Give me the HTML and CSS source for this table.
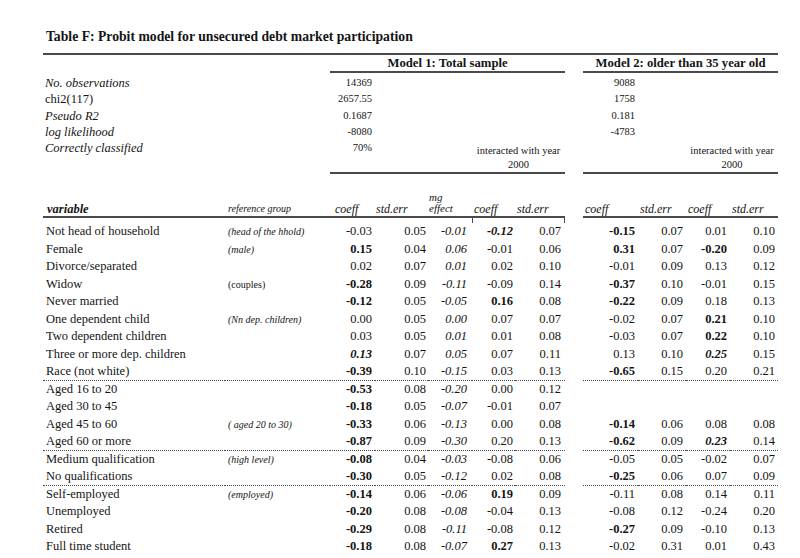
FILE: index.html
```html
<!DOCTYPE html>
<html lang="en">
<head>
<meta charset="utf-8">
<title>Table F: Probit model</title>
<link rel="stylesheet" href="styles.css">
</head>
<body>
<div class="page">
  <h1 class="title">Table F: Probit model for unsecured debt market participation</h1>
  <table class="probit">
    <colgroup>
      <col class="w-label"><col class="w-ref"><col class="w-c1"><col class="w-se1"><col class="w-mg"><col class="w-c2"><col class="w-se2"><col class="w-gap"><col class="w-m2c1"><col class="w-m2se1"><col class="w-m2c2"><col class="w-m2se2">
    </colgroup>
    <thead>
      <tr class="models">
        <th></th><th></th>
        <th colspan="5" class="model">Model 1: Total sample</th>
        <th class="gap"></th>
        <th colspan="4" class="model">Model 2: older than 35 year old</th>
      </tr>
    </thead>
    <tbody class="stats">
      <tr class="first">
        <td class="slab it">No. observations</td><td></td><td class="snum">14369</td><td colspan="4"></td><td class="gap"></td><td class="snum">9088</td><td colspan="3"></td>
      </tr>
      <tr>
        <td class="slab">chi2(117)</td><td></td><td class="snum">2657.55</td><td colspan="4"></td><td class="gap"></td><td class="snum">1758</td><td colspan="3"></td>
      </tr>
      <tr>
        <td class="slab it">Pseudo R2</td><td></td><td class="snum">0.1687</td><td colspan="4"></td><td class="gap"></td><td class="snum">0.181</td><td colspan="3"></td>
      </tr>
      <tr>
        <td class="slab it">log likelihood</td><td></td><td class="snum">-8080</td><td colspan="4"></td><td class="gap"></td><td class="snum">-4783</td><td colspan="3"></td>
      </tr>
      <tr class="last">
        <td class="slab it">Correctly classified</td><td></td>
        <td class="snum rule">70%</td><td class="rule"></td><td class="rule"></td>
        <td colspan="2" class="inter rule">interacted with year<br>2000</td>
        <td class="gap"></td>
        <td class="rule"></td><td class="rule"></td>
        <td colspan="2" class="inter rule">interacted with year<br>2000</td>
      </tr>
    </tbody>
    <tbody class="colhead">
      <tr>
        <th class="h-var">variable</th>
        <th class="h-ref">reference group</th>
        <th class="h-c1">coeff</th>
        <th class="h-se">std.err</th>
        <th class="h-mg">mg<br>effect</th>
        <th class="h-c2">coeff</th>
        <th class="h-se2">std.err</th>
        <th class="gap"></th>
        <th class="h-m2">coeff</th>
        <th class="h-m2">std.err</th>
        <th class="h-m2">coeff</th>
        <th class="h-m2">std.err</th>
      </tr>
    </tbody>
    <tbody class="data">
      <tr class="first"><td>Not head of household</td><td class="ref i">(head of the hhold)</td><td>-0.03</td><td>0.05</td><td class="i">-0.01</td><td class="bi">-0.12</td><td>0.07</td><td class="gap"></td><td class="b">-0.15</td><td>0.07</td><td>0.01</td><td>0.10</td></tr>
      <tr><td>Female</td><td class="ref i">(male)</td><td class="b">0.15</td><td>0.04</td><td class="i">0.06</td><td>-0.01</td><td>0.06</td><td class="gap"></td><td class="b">0.31</td><td>0.07</td><td class="b">-0.20</td><td>0.09</td></tr>
      <tr><td>Divorce/separated</td><td class="ref"></td><td>0.02</td><td>0.07</td><td class="i">0.01</td><td>0.02</td><td>0.10</td><td class="gap"></td><td>-0.01</td><td>0.09</td><td>0.13</td><td>0.12</td></tr>
      <tr><td>Widow</td><td class="ref">(couples)</td><td class="b">-0.28</td><td>0.09</td><td class="i">-0.11</td><td>-0.09</td><td>0.14</td><td class="gap"></td><td class="b">-0.37</td><td>0.10</td><td>-0.01</td><td>0.15</td></tr>
      <tr><td>Never married</td><td class="ref"></td><td class="b">-0.12</td><td>0.05</td><td class="i">-0.05</td><td class="b">0.16</td><td>0.08</td><td class="gap"></td><td class="b">-0.22</td><td>0.09</td><td>0.18</td><td>0.13</td></tr>
      <tr><td>One dependent child</td><td class="ref i">(Nn dep. children)</td><td>0.00</td><td>0.05</td><td class="i">0.00</td><td>0.07</td><td>0.07</td><td class="gap"></td><td>-0.02</td><td>0.07</td><td class="b">0.21</td><td>0.10</td></tr>
      <tr><td>Two dependent children</td><td class="ref"></td><td>0.03</td><td>0.05</td><td class="i">0.01</td><td>0.01</td><td>0.08</td><td class="gap"></td><td>-0.03</td><td>0.07</td><td class="b">0.22</td><td>0.10</td></tr>
      <tr><td>Three or more dep. children</td><td class="ref"></td><td class="bi">0.13</td><td>0.07</td><td class="i">0.05</td><td>0.07</td><td>0.11</td><td class="gap"></td><td>0.13</td><td>0.10</td><td class="bi">0.25</td><td>0.15</td></tr>
      <tr class="sep"><td>Race (not white)</td><td class="ref"></td><td class="b">-0.39</td><td>0.10</td><td class="i">-0.15</td><td>0.03</td><td>0.13</td><td class="gap"></td><td class="b">-0.65</td><td>0.15</td><td>0.20</td><td>0.21</td></tr>
      <tr><td>Aged 16 to 20</td><td class="ref"></td><td class="b">-0.53</td><td>0.08</td><td class="i">-0.20</td><td>0.00</td><td>0.12</td><td class="gap"></td><td></td><td></td><td></td><td></td></tr>
      <tr><td>Aged 30 to 45</td><td class="ref"></td><td class="b">-0.18</td><td>0.05</td><td class="i">-0.07</td><td>-0.01</td><td>0.07</td><td class="gap"></td><td></td><td></td><td></td><td></td></tr>
      <tr><td>Aged 45 to 60</td><td class="ref i">( aged 20 to 30)</td><td class="b">-0.33</td><td>0.06</td><td class="i">-0.13</td><td>0.00</td><td>0.08</td><td class="gap"></td><td class="b">-0.14</td><td>0.06</td><td>0.08</td><td>0.08</td></tr>
      <tr class="sep"><td>Aged 60 or more</td><td class="ref"></td><td class="b">-0.87</td><td>0.09</td><td class="i">-0.30</td><td>0.20</td><td>0.13</td><td class="gap"></td><td class="b">-0.62</td><td>0.09</td><td class="bi">0.23</td><td>0.14</td></tr>
      <tr><td>Medium qualification</td><td class="ref i">(high level)</td><td class="b">-0.08</td><td>0.04</td><td class="i">-0.03</td><td>-0.08</td><td>0.06</td><td class="gap"></td><td>-0.05</td><td>0.05</td><td>-0.02</td><td>0.07</td></tr>
      <tr class="sep"><td>No qualifications</td><td class="ref"></td><td class="b">-0.30</td><td>0.05</td><td class="i">-0.12</td><td>0.02</td><td>0.08</td><td class="gap"></td><td class="b">-0.25</td><td>0.06</td><td>0.07</td><td>0.09</td></tr>
      <tr><td>Self-employed</td><td class="ref i">(employed)</td><td class="b">-0.14</td><td>0.06</td><td class="i">-0.06</td><td class="b">0.19</td><td>0.09</td><td class="gap"></td><td>-0.11</td><td>0.08</td><td>0.14</td><td>0.11</td></tr>
      <tr><td>Unemployed</td><td class="ref"></td><td class="b">-0.20</td><td>0.08</td><td class="i">-0.08</td><td>-0.04</td><td>0.13</td><td class="gap"></td><td>-0.08</td><td>0.12</td><td>-0.24</td><td>0.20</td></tr>
      <tr><td>Retired</td><td class="ref"></td><td class="b">-0.29</td><td>0.08</td><td class="i">-0.11</td><td>-0.08</td><td>0.12</td><td class="gap"></td><td class="b">-0.27</td><td>0.09</td><td>-0.10</td><td>0.13</td></tr>
      <tr><td>Full time student</td><td class="ref"></td><td class="b">-0.18</td><td>0.08</td><td class="i">-0.07</td><td class="b">0.27</td><td>0.13</td><td class="gap"></td><td>-0.02</td><td>0.31</td><td>0.01</td><td>0.43</td></tr>
    </tbody>
  </table>
</div>
</body>
</html>
```

FILE: styles.css
```css
* { box-sizing: border-box; }

html, body {
  margin: 0;
  padding: 0;
  background: #ffffff;
}

body {
  color: #141414;
  font-family: "Liberation Serif", "Times New Roman", serif;
}

.page {
  padding: 27px 0 0 43px;
}

.title {
  margin: 0 0 6px 3px;
  font-size: 13.7px;
  line-height: 20px;
  font-weight: bold;
}

.probit {
  table-layout: fixed;
  width: 735px;
  border-collapse: separate;
  border-spacing: 0;
  border-top: 2px solid #4a4a4a;
}

.w-label { width: 182px; }
.w-ref   { width: 105px; }
.w-c1    { width: 45px; }
.w-se1   { width: 53px; }
.w-mg    { width: 44px; }
.w-c2    { width: 43px; }
.w-se2   { width: 50px; }
.w-gap   { width: 18px; }
.w-m2c1  { width: 55px; }
.w-m2se1 { width: 48px; }
.w-m2c2  { width: 44px; }
.w-m2se2 { width: 48px; }

.probit th,
.probit td {
  padding: 0;
  font-weight: normal;
  white-space: nowrap;
}

/* model header row */
.models th {
  line-height: 16px;
  font-size: 12.7px;
}
.models .model {
  font-weight: bold;
  text-align: center;
  border-bottom: 2px solid #4a4a4a;
}

/* statistics block */
.stats td {
  line-height: 16.3px;
  vertical-align: top;
}
.stats tr.first td { padding-top: 2px; }
.stats .slab {
  font-size: 12.5px;
  padding-left: 2px;
}
.stats .it { font-style: italic; }
.stats .snum {
  font-size: 10.5px;
  text-align: right;
  padding-right: 3px;
}
.stats .inter {
  font-size: 10.5px;
  line-height: 14px;
  text-align: center;
  vertical-align: bottom;
  padding-top: 4px;
}
.stats .rule { border-bottom: 2px solid #4a4a4a; }

/* column headings */
.colhead th {
  vertical-align: bottom;
  text-align: left;
  font-style: italic;
  font-size: 12px;
  line-height: 14px;
  border-bottom: 2px solid #4a4a4a;
  padding-left: 2px;
}
.colhead th.gap { border-bottom: none; }
.colhead .h-var {
  font-weight: bold;
  font-size: 12.5px;
  padding-left: 4px;
}
.colhead .h-ref {
  font-size: 10px;
  padding-left: 3px;
}
.colhead .h-c1 { padding-left: 5px; }
.colhead .h-se { padding-left: 1px; }
.colhead .h-mg {
  font-size: 11px;
  line-height: 11px;
  padding: 18px 0 2px 1px;
}
.colhead .h-c2,
.colhead .h-se2 { position: relative; }
.colhead .h-c2::before,
.colhead .h-se2::after {
  content: "";
  position: absolute;
  bottom: -7px;
  width: 1px;
  height: 6px;
  background: #4a4a4a;
}
.colhead .h-c2::before { left: 0; }
.colhead .h-se2::after { right: 0; }

/* data rows */
.data td {
  font-size: 12.5px;
  line-height: 17.5px;
  text-align: right;
}
.data tr.first td { padding-top: 5px; }
.data td:nth-child(1) { text-align: left; padding-left: 3px; }
.data td.ref {
  text-align: left;
  font-size: 10px;
  padding-left: 3px;
}
.data td:nth-child(3)  { padding-right: 3px; }
.data td:nth-child(4)  { padding-right: 2px; }
.data td:nth-child(5)  { padding-right: 5px; }
.data td:nth-child(6)  { padding-right: 2px; }
.data td:nth-child(7)  { padding-right: 4px; }
.data td:nth-child(9)  { padding-right: 3px; }
.data td:nth-child(10) { padding-right: 3px; }
.data td:nth-child(11) { padding-right: 3px; }
.data td:nth-child(12) { padding-right: 3px; }

.data tr.sep td {
  line-height: 16.5px;
  border-bottom: 1px dotted #4a4a4a;
}
.data tr.sep td.gap { border-bottom: none; }

.data .b  { font-weight: bold; }
.data .i  { font-style: italic; }
.data .bi { font-weight: bold; font-style: italic; }
```
